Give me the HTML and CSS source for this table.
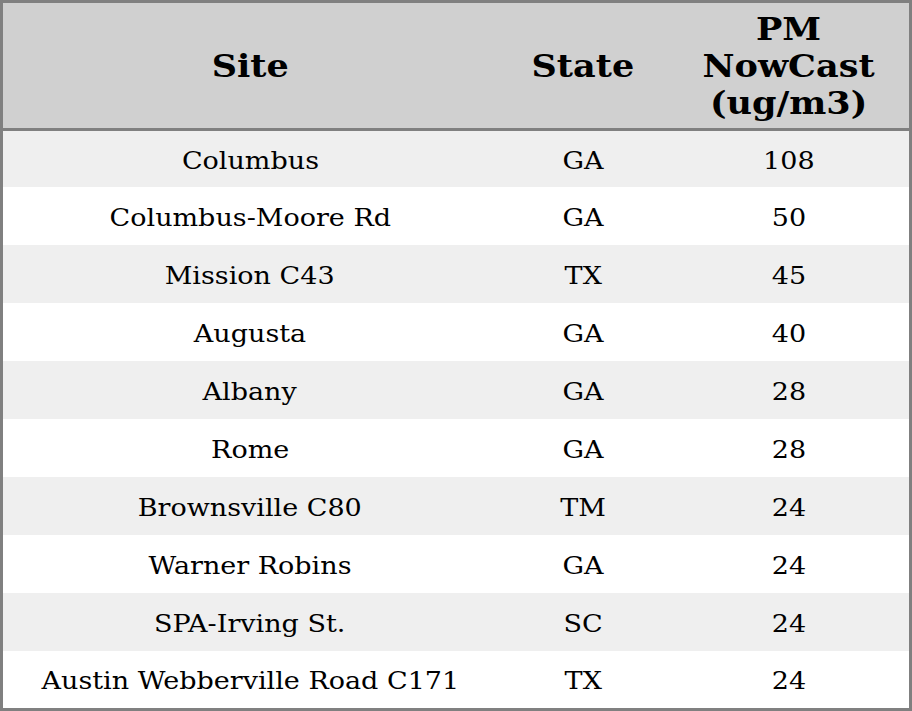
FILE: index.html
```html
<!DOCTYPE html>
<html>
<head>
<meta charset="utf-8">
<link rel="stylesheet" href="styles.css">
</head>
<body>
<table class="aq">
  <thead>
    <tr class="head">
      <th class="c-site"><span class="t">Site</span></th>
      <th class="c-state"><span class="t">State</span></th>
      <th class="c-pm"><span class="t">PM<br>NowCast<br>(ug/m3)</span></th>
    </tr>
  </thead>
  <tbody>
    <tr class="odd first"><td><span class="t">Columbus</span></td><td><span class="t">GA</span></td><td><span class="t">108</span></td></tr>
    <tr class="even"><td><span class="t">Columbus-Moore Rd</span></td><td><span class="t">GA</span></td><td><span class="t">50</span></td></tr>
    <tr class="odd"><td><span class="t">Mission C43</span></td><td><span class="t">TX</span></td><td><span class="t">45</span></td></tr>
    <tr class="even"><td><span class="t">Augusta</span></td><td><span class="t">GA</span></td><td><span class="t">40</span></td></tr>
    <tr class="odd"><td><span class="t">Albany</span></td><td><span class="t">GA</span></td><td><span class="t">28</span></td></tr>
    <tr class="even"><td><span class="t">Rome</span></td><td><span class="t">GA</span></td><td><span class="t">28</span></td></tr>
    <tr class="odd"><td><span class="t">Brownsville C80</span></td><td><span class="t">TM</span></td><td><span class="t">24</span></td></tr>
    <tr class="even"><td><span class="t">Warner Robins</span></td><td><span class="t">GA</span></td><td><span class="t">24</span></td></tr>
    <tr class="odd"><td><span class="t">SPA-Irving St.</span></td><td><span class="t">SC</span></td><td><span class="t">24</span></td></tr>
    <tr class="even last"><td><span class="t">Austin Webberville Road C171</span></td><td><span class="t">TX</span></td><td><span class="t">24</span></td></tr>
  </tbody>
</table>
</body>
</html>
```

FILE: styles.css
```css
html, body {
  margin: 0;
  padding: 0;
  background: #ffffff;
}
.aq {
  width: 912px;
  border-collapse: separate;
  border-spacing: 0;
  border: 3px solid #808080;
  font-family: "DejaVu Serif", serif;
  color: #000;
  table-layout: fixed;
}
.aq th, .aq td {
  padding: 0;
  text-align: center;
  vertical-align: middle;
}
.t {
  display: inline-block;
  transform: translateY(1px) scaleX(1.08);
}
.head th {
  background: #d0d0d0;
  font-weight: bold;
  font-size: 32px;
  line-height: 37px;
  height: 125px;
  border-bottom: 3px solid #808080;
}
.head .t {
  transform: translateY(1px) scaleX(1.095);
}
.c-site { width: 494px; }
.c-state { width: 172px; }
.c-pm { width: 240px; }
.aq td {
  font-size: 25px;
  height: 58px;
}
.first td { height: 56px; }
.last td { height: 57px; }
.odd td { background: #efefef; }
.even td { background: #ffffff; }
```
